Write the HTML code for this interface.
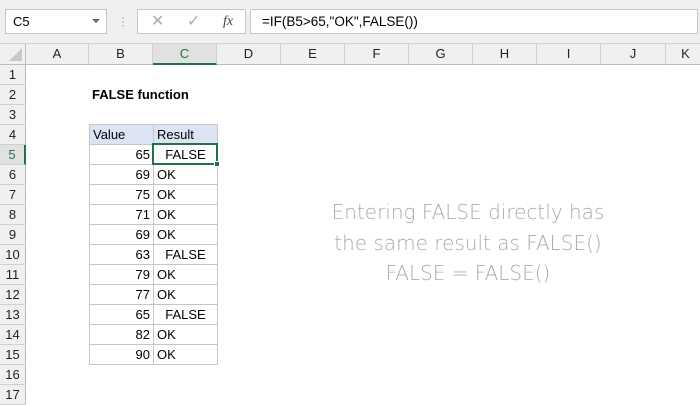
<!DOCTYPE html>
<html><head><style>
*{margin:0;padding:0;box-sizing:border-box}
body{width:700px;height:400px;overflow:hidden;background:#fff;font-family:"Liberation Sans",sans-serif;position:relative;font-size:13px;color:#000}
.abs{position:absolute}
.top{left:0;top:0;width:700px;height:44px;background:#f0f0f0;border-bottom:1px solid #d4d4d4}
.box{background:#fff;border:1px solid #c6c6c6;height:25px;top:9px}
.ch{top:44px;height:21px;background:#f0f0f0;border-right:1px solid #d0d0d0;border-bottom:1px solid #bdbdbd;text-align:center;line-height:20px;font-size:13px;color:#222}
.rh{left:0;width:26px;height:20px;background:#f0f0f0;border-bottom:1px solid #d0d0d0;border-right:1px solid #bdbdbd;text-align:center;line-height:20px;font-size:13px;color:#222}
.c{height:20px;border-right:1px solid #c6c6c6;border-bottom:1px solid #c6c6c6;line-height:20px;font-size:13px;padding:0 3px}
.note{left:300px;width:336px;text-align:center;color:#aaa;font-size:20px;font-family:"DejaVu Sans",sans-serif;font-weight:300}
</style></head><body>
<div class="abs top"></div>
<div class="abs box" style="left:5px;width:102px;padding-left:7px;line-height:23px;font-size:13px">C5<span style="position:absolute;right:6px;top:9px;width:0;height:0;border-left:4px solid transparent;border-right:4px solid transparent;border-top:4px solid #666"></span></div>
<div class="abs" style="left:121px;top:15px;color:#999;font-size:12px;line-height:4px">·<br>·<br>·</div>
<div class="abs box" style="left:137px;width:109px;color:#aaa;font-size:16px;line-height:23px"><span style="position:absolute;left:13px">✕</span><span style="position:absolute;left:49px">✓</span><span style="position:absolute;left:85px;color:#444;font-family:'Liberation Serif',serif;font-style:italic;font-size:14px">fx</span></div>
<div class="abs box" style="left:250px;width:448px;padding-left:11px;line-height:23px;font-size:13.5px">=IF(B5&gt;65,"OK",FALSE())</div>
<div class="abs" style="left:0;top:44px;width:26px;height:21px;background:#f0f0f0;border-right:1px solid #bdbdbd;border-bottom:1px solid #bdbdbd"><div style="position:absolute;right:3px;bottom:3px;width:0;height:0;border-left:13px solid transparent;border-bottom:13px solid #c8c8c8"></div></div>
<div class="abs ch" style="left:26px;width:63px">A</div>
<div class="abs ch" style="left:89px;width:64px">B</div>
<div class="abs ch" style="left:153px;width:64px;background:#e1e1e1;border-bottom:2px solid #217346;color:#217346">C</div>
<div class="abs ch" style="left:217px;width:64px">D</div>
<div class="abs ch" style="left:281px;width:64px">E</div>
<div class="abs ch" style="left:345px;width:64px">F</div>
<div class="abs ch" style="left:409px;width:64px">G</div>
<div class="abs ch" style="left:473px;width:64px">H</div>
<div class="abs ch" style="left:537px;width:64px">I</div>
<div class="abs ch" style="left:601px;width:65px">J</div>
<div class="abs ch" style="left:666px;width:40px">K</div>
<div class="abs rh" style="top:65px">1</div>
<div class="abs rh" style="top:85px">2</div>
<div class="abs rh" style="top:105px">3</div>
<div class="abs rh" style="top:125px">4</div>
<div class="abs rh" style="top:145px;background:#e1e1e1;border-right:2px solid #217346;color:#217346">5</div>
<div class="abs rh" style="top:165px">6</div>
<div class="abs rh" style="top:185px">7</div>
<div class="abs rh" style="top:205px">8</div>
<div class="abs rh" style="top:225px">9</div>
<div class="abs rh" style="top:245px">10</div>
<div class="abs rh" style="top:265px">11</div>
<div class="abs rh" style="top:285px">12</div>
<div class="abs rh" style="top:305px">13</div>
<div class="abs rh" style="top:325px">14</div>
<div class="abs rh" style="top:345px">15</div>
<div class="abs rh" style="top:365px">16</div>
<div class="abs rh" style="top:385px">17</div>
<div class="abs" style="left:92px;top:85px;line-height:20px;font-weight:bold;font-size:13px">FALSE function</div>
<div class="abs" style="left:89px;top:124px;width:129px;height:241px;border-left:1px solid #c6c6c6;border-top:1px solid #c6c6c6"></div>
<div class="abs c" style="left:90px;top:125px;width:64px;background:#dce3f3">Value</div>
<div class="abs c" style="left:154px;top:125px;width:64px;background:#dce3f3">Result</div>
<div id="rows"></div>
<div class="abs c" style="left:90px;top:145px;width:64px;text-align:right">65</div><div class="abs c" style="left:154px;top:145px;width:64px;text-align:center">FALSE</div>
<div class="abs c" style="left:90px;top:165px;width:64px;text-align:right">69</div><div class="abs c" style="left:154px;top:165px;width:64px">OK</div>
<div class="abs c" style="left:90px;top:185px;width:64px;text-align:right">75</div><div class="abs c" style="left:154px;top:185px;width:64px">OK</div>
<div class="abs c" style="left:90px;top:205px;width:64px;text-align:right">71</div><div class="abs c" style="left:154px;top:205px;width:64px">OK</div>
<div class="abs c" style="left:90px;top:225px;width:64px;text-align:right">69</div><div class="abs c" style="left:154px;top:225px;width:64px">OK</div>
<div class="abs c" style="left:90px;top:245px;width:64px;text-align:right">63</div><div class="abs c" style="left:154px;top:245px;width:64px;text-align:center">FALSE</div>
<div class="abs c" style="left:90px;top:265px;width:64px;text-align:right">79</div><div class="abs c" style="left:154px;top:265px;width:64px">OK</div>
<div class="abs c" style="left:90px;top:285px;width:64px;text-align:right">77</div><div class="abs c" style="left:154px;top:285px;width:64px">OK</div>
<div class="abs c" style="left:90px;top:305px;width:64px;text-align:right">65</div><div class="abs c" style="left:154px;top:305px;width:64px;text-align:center">FALSE</div>
<div class="abs c" style="left:90px;top:325px;width:64px;text-align:right">82</div><div class="abs c" style="left:154px;top:325px;width:64px">OK</div>
<div class="abs c" style="left:90px;top:345px;width:64px;text-align:right">90</div><div class="abs c" style="left:154px;top:345px;width:64px">OK</div>
<div class="abs" style="left:152px;top:143px;width:66px;height:22px;border:2px solid #217346"></div>
<div class="abs" style="left:214px;top:161px;width:6px;height:6px;background:#217346;border:1px solid #fff"></div>
<div class="abs note" style="top:200px">Entering FALSE directly has</div>
<div class="abs note" style="top:231px">the same result as FALSE()</div>
<div class="abs note" style="top:261px">FALSE = FALSE()</div>
</body></html>
